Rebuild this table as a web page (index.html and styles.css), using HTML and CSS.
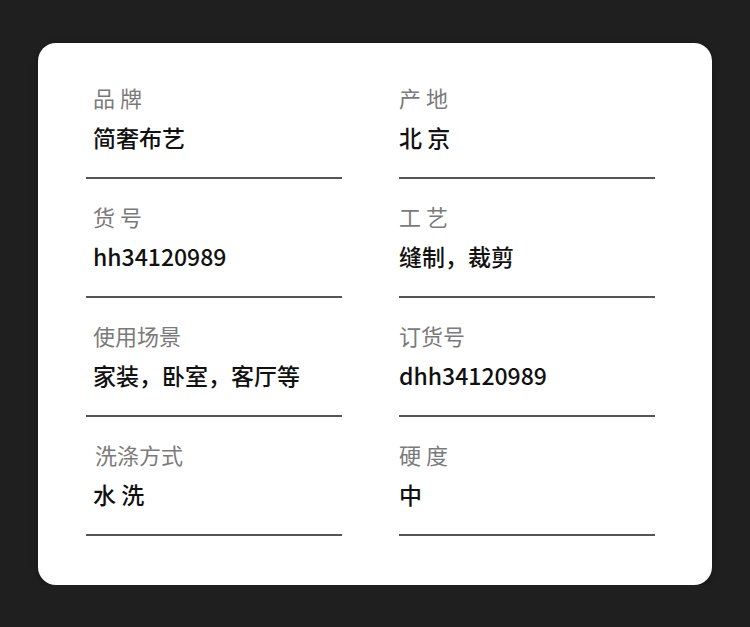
FILE: index.html
```html
<!DOCTYPE html>
<html lang="zh-CN">
<head>
  <meta charset="UTF-8">
  <meta name="viewport" content="width=device-width, initial-scale=1.0">
  <title>商品参数</title>
  <link rel="stylesheet" href="styles.css">
</head>
<body>
  <div class="spec-card">
    <div class="spec-grid">
      <div class="spec-item left">
        <div class="spec-label">品 牌</div>
        <div class="spec-value">简奢布艺</div>
      </div>
      <div class="spec-item">
        <div class="spec-label">产 地</div>
        <div class="spec-value">北 京</div>
      </div>
      <div class="spec-item left">
        <div class="spec-label">货 号</div>
        <div class="spec-value">hh34120989</div>
      </div>
      <div class="spec-item">
        <div class="spec-label">工 艺</div>
        <div class="spec-value">缝制，裁剪</div>
      </div>
      <div class="spec-item left">
        <div class="spec-label">使用场景</div>
        <div class="spec-value">家装，卧室，客厅等</div>
      </div>
      <div class="spec-item">
        <div class="spec-label">订货号</div>
        <div class="spec-value">dhh34120989</div>
      </div>
      <div class="spec-item left">
        <div class="spec-label wash">洗涤方式</div>
        <div class="spec-value">水 洗</div>
      </div>
      <div class="spec-item">
        <div class="spec-label">硬 度</div>
        <div class="spec-value">中</div>
      </div>
    </div>
  </div>
</body>
</html>
```

FILE: styles.css
```css
body {
  margin: 0;
  background: #1f1f1f;
  font-family: "Noto Sans CJK SC", "Noto Sans", sans-serif;
  padding: 43px 38px 0 38px;
}

.spec-card {
  background: #fff;
  border-radius: 18px;
  padding: 17px 57px 49px 48px;
  box-shadow: 0 2px 6px rgba(0, 0, 0, 0.3);
}

.spec-grid {
  display: grid;
  grid-template-columns: 256px 256px;
  column-gap: 57px;
}

.spec-item {
  padding: 22px 0 25px;
  border-bottom: 2px solid #555;
}

.spec-item.left {
  padding-left: 7px;
}

.spec-label {
  font-size: 22px;
  line-height: 30px;
  color: #7a7a7a;
  margin-bottom: 10px;
}

.spec-label.wash {
  padding-left: 2px;
}

.spec-value {
  font-size: 23px;
  line-height: 30px;
  color: #111;
  font-weight: 500;
}
```
